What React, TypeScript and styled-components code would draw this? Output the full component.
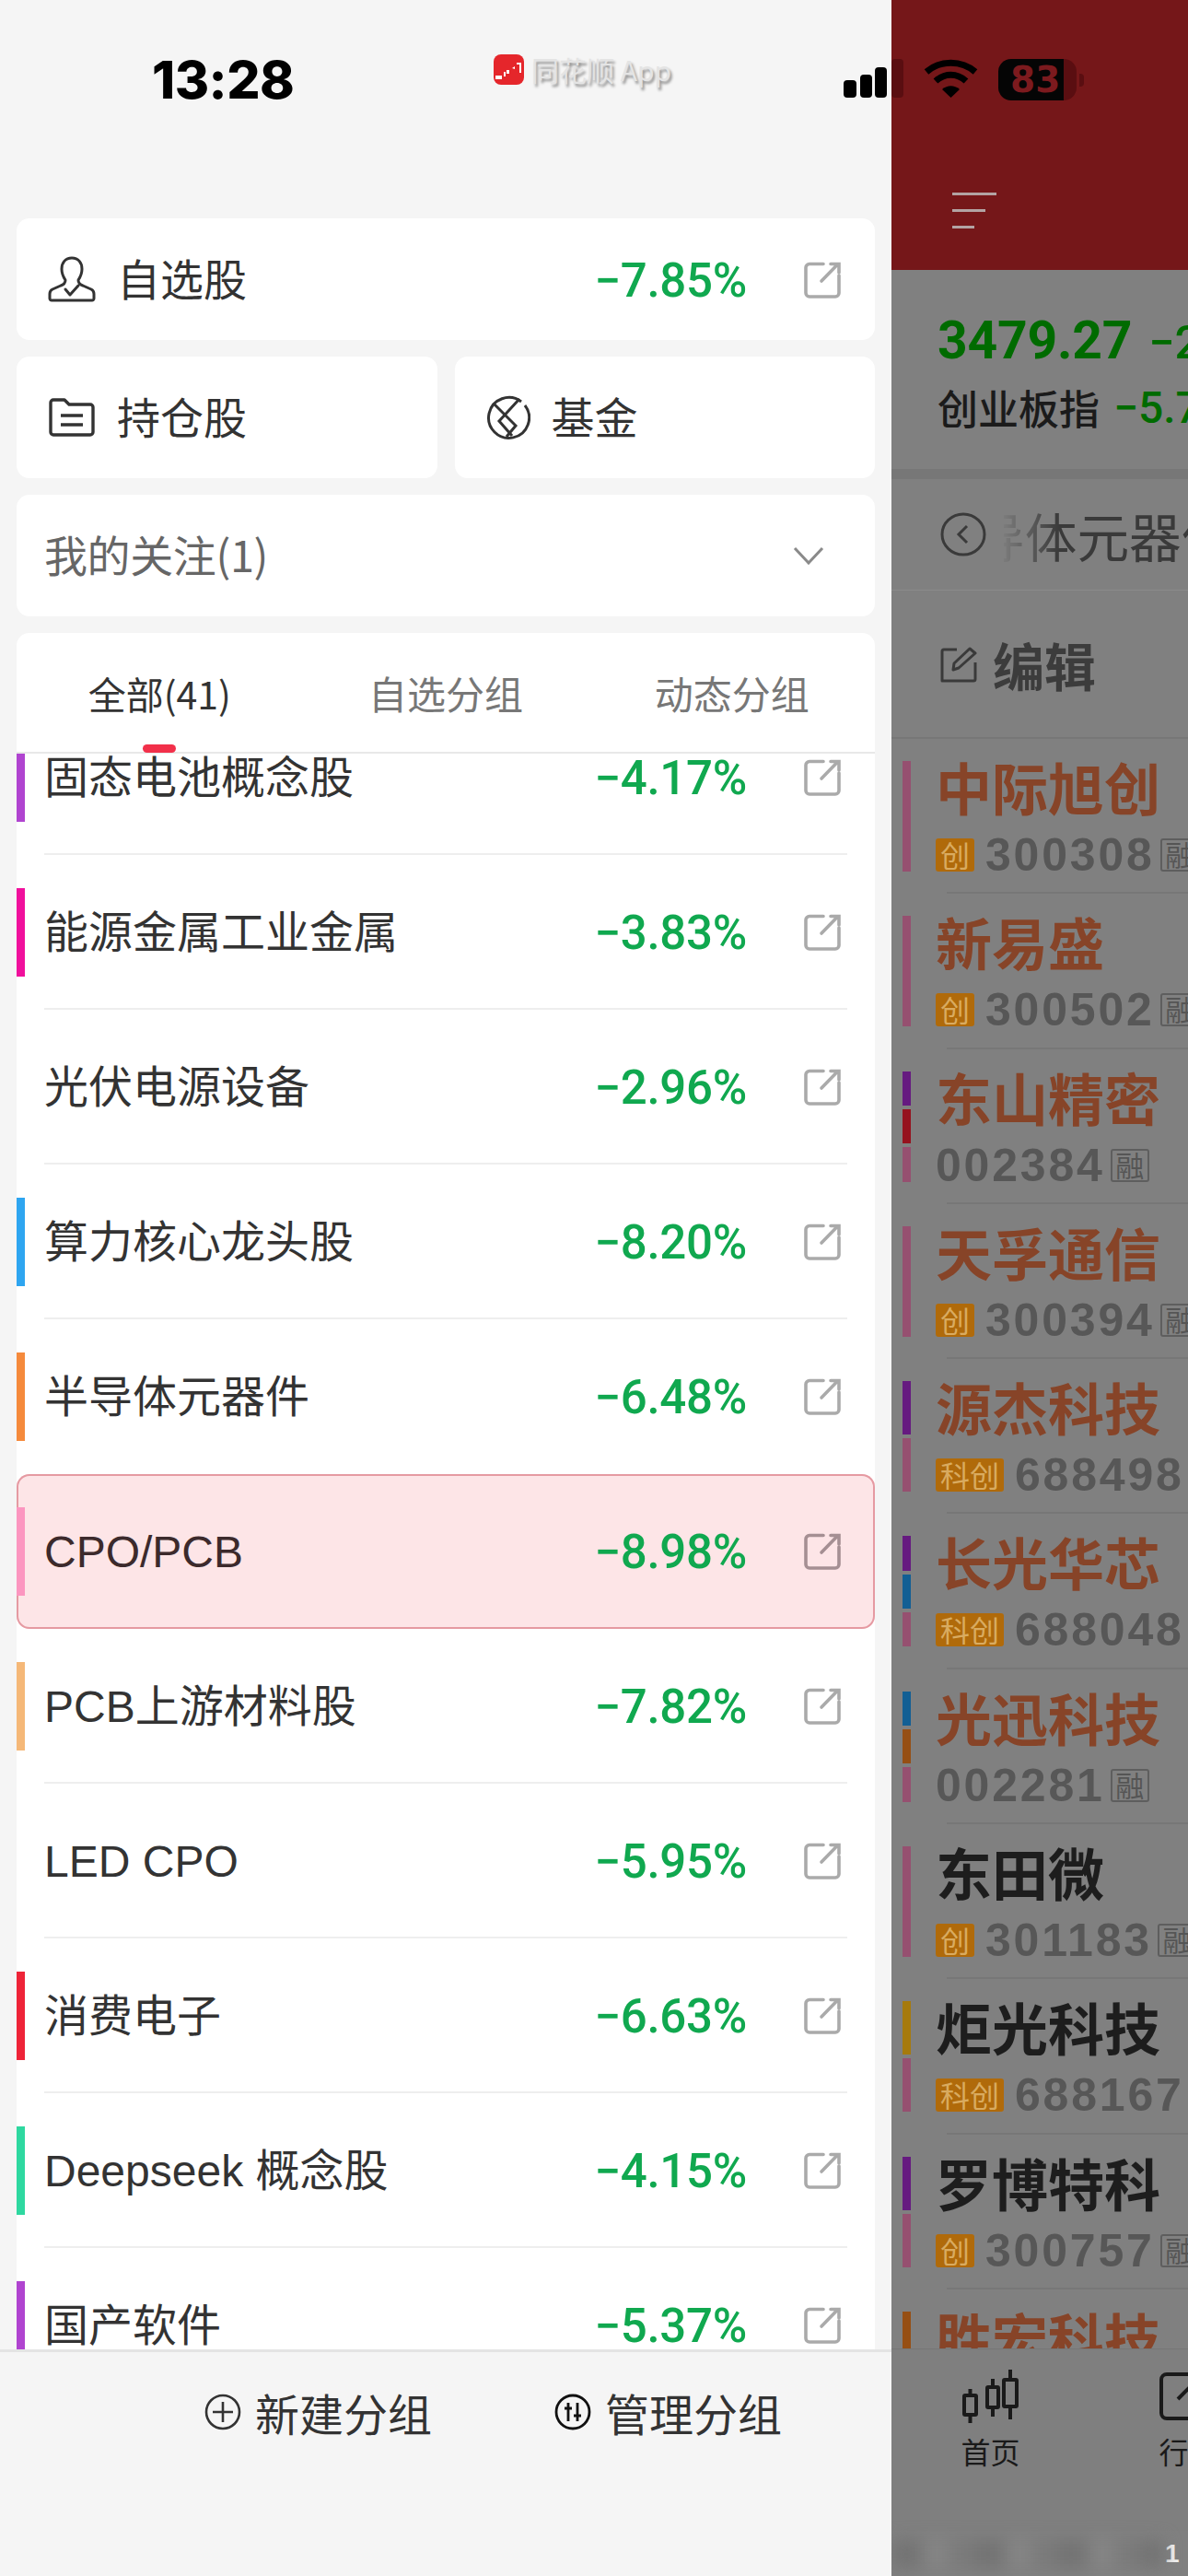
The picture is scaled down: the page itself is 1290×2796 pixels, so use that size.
import React from "react";
import styled, { createGlobalStyle } from "styled-components";

const CJK = `"Noto Sans CJK SC", "Noto Sans", sans-serif`;

const GlobalStyle = createGlobalStyle`
    html, body {
        margin: 0;
        padding: 0;
        background: #808080;
    }
    * {
        box-sizing: border-box;
    }
`;

const Page = styled.div`
    position: relative;
    width: 1290px;
    height: 2796px;
    display: flex;
    overflow: hidden;
    font-family: ${CJK};
`;

/* status bar sits on top of both panels */
const StatusBar = styled.div`
    position: absolute;
    top: 0;
    left: 0;
    width: 1290px;
    height: 130px;
    padding: 64px 113px 0 165px;
    display: flex;
    align-items: flex-start;
`;

const Time = styled.div`
    width: 371px;
    margin-top: -8px;
    font-family: Inter, "Liberation Sans", sans-serif;
    font-size: 57px;
    line-height: 62px;
    font-weight: 800;
    letter-spacing: -0.5px;
    color: #000;
`;

const AppTag = styled.div`
    display: flex;
    align-items: center;
    gap: 8px;
    margin-top: -7px;
`;

const AppName = styled.span`
    font-size: 30px;
    line-height: 36px;
    color: #e4e4e4;
    text-shadow: 2px 3px 3px #8c8c8c;
`;

const StatusIcons = styled.div`
    margin-left: auto;
    display: flex;
    align-items: flex-start;
`;

const Battery = styled.div`
    margin-left: 22px;
    display: flex;
    align-items: center;
`;

const BatteryFill = styled.div`
    width: 71px;
    height: 45px;
    padding-left: 13px;
    border-radius: 14px 0 0 14px;
    background: #050505;
    color: #7c1a1e;
    font-family: "DejaVu Sans", sans-serif;
    font-weight: 700;
    font-size: 39px;
    line-height: 45px;
`;

const BatteryRest = styled.div`
    width: 14px;
    height: 45px;
    border-radius: 0 14px 14px 0;
    background: #5a0e11;
`;

const BatteryTip = styled.div`
    width: 5px;
    height: 14px;
    margin-left: 3px;
    border-radius: 0 4px 4px 0;
    background: #5a0e11;
`;

/* left drawer */
const Drawer = styled.div`
    width: 968px;
    height: 2796px;
    flex: none;
    padding-top: 237px;
    display: flex;
    flex-direction: column;
    background: #f5f5f5;
`;

const Card = styled.div`
    height: 132px;
    flex: 1;
    padding: 0 34px 0 34px;
    display: flex;
    align-items: center;
    border-radius: 14px;
    background: #fff;
`;

const CardRow = styled.div`
    margin: 0 18px 18px;
    display: flex;
    gap: 19px;
`;

const CardLabel = styled.span<{ $muted?: boolean }>`
    margin-left: ${(p) => (p.$muted ? "-4px" : "23px")};
    padding-bottom: 5px;
    font-size: 47px;
    line-height: 60px;
    letter-spacing: ${(p) => (p.$muted ? "-0.4px" : "0")};
    color: ${(p) => (p.$muted ? "#666" : "#333")};
`;

const Percent = styled.span`
    margin-left: auto;
    margin-top: 3px;
    font-family: Roboto, sans-serif;
    font-weight: 500;
    font-size: 51px;
    line-height: 60px;
    letter-spacing: -0.3px;
    color: #10a84f;
`;

const LinkIcon = styled.svg`
    flex: none;
    width: 40px;
    height: 40px;
    margin-top: 2px;
    margin-left: 62px;
    margin-right: 3px;
    color: #aaa;
`;

const Tabs = styled.div`
    position: relative;
    height: 131px;
    margin: 0 18px;
    display: grid;
    grid-template-columns: repeat(3, 1fr);
    align-items: center;
    justify-items: center;
    border-radius: 14px 14px 0 0;
    border-bottom: 2px solid #e8e8e8;
    background: #fff;
`;

const Tab = styled.div<{ $active?: boolean }>`
    font-size: ${(p) => (p.$active ? "41px" : "42px")};
    line-height: 50px;
    color: ${(p) => (p.$active ? "#333" : "#777")};
`;

const TabMark = styled.div`
    position: absolute;
    left: 137px;
    bottom: -1px;
    width: 36px;
    height: 9px;
    border-radius: 5px;
    background: #f2304a;
`;

const ListClip = styled.div`
    height: 1732px;
    margin: 0 18px;
    flex: none;
    overflow: hidden;
    background: #fff;
`;

const List = styled.div`
    margin-top: -58px;
`;

const Row = styled.div<{ $active?: boolean }>`
    height: 168px;
    display: flex;
    align-items: center;
    border-radius: ${(p) => (p.$active ? "14px" : "0")};
    background: ${(p) => (p.$active ? "#fde5e7" : "transparent")};
    box-shadow: ${(p) => (p.$active ? "inset 0 0 0 2px #e59aa2" : "none")};
    ${LinkIcon} {
        color: ${(p) => (p.$active ? "#a58f93" : "#aaa")};
    }
`;

const RowStripe = styled.div<{ $color?: string }>`
    width: 9px;
    height: 96px;
    flex: none;
    background: ${(p) => p.$color || "transparent"};
`;

const RowBody = styled.div<{ $plain?: boolean }>`
    height: 100%;
    flex: 1;
    margin: 0 30px 0 21px;
    display: flex;
    align-items: center;
    border-bottom: 2px solid ${(p) => (p.$plain ? "transparent" : "#eeeeee")};
`;

const RowName = styled.span<{ $active?: boolean }>`
    padding-top: 4px;
    font-family: "Liberation Sans", ${CJK};
    font-size: 48px;
    line-height: 60px;
    color: ${(p) => (p.$active ? "#3c2a2c" : "#333")};
`;

const RowPercent = styled(Percent)``;

const RowLink = styled(LinkIcon)`
    margin-right: 7px;
`;

const Footer = styled.div`
    flex: 1;
    padding: 35px 0 0 222px;
    display: flex;
    gap: 133px;
    align-items: flex-start;
    border-top: 3px solid #e4e4e4;
    background: #f5f5f5;
`;

const FooterBtn = styled.div`
    display: flex;
    align-items: center;
    gap: 15px;
    font-size: 48px;
    line-height: 60px;
    color: #333;
`;

/* dimmed page behind the drawer */
const Behind = styled.div`
    width: 322px;
    flex: none;
    display: flex;
    flex-direction: column;
    overflow: hidden;
    background: #808080;
    white-space: nowrap;
`;

const RedHeader = styled.div`
    height: 293px;
    flex: none;
    padding: 209px 0 0 66px;
    display: flex;
    flex-direction: column;
    gap: 15px;
    background: #751719;
`;

const BurgerLine = styled.div<{ $w: number }>`
    width: ${(p) => p.$w}px;
    height: 3px;
    background: #b3a3a3;
`;

const IndexBlock = styled.div`
    height: 216px;
    flex: none;
    padding: 41px 0 0 50px;
`;

const IndexTop = styled.div`
    display: flex;
    align-items: baseline;
    gap: 18px;
    height: 72px;
    font-family: Roboto, sans-serif;
    color: #006b00;
`;

const IndexValue = styled.span`
    font-size: 57px;
    font-weight: 700;
    letter-spacing: -0.2px;
    line-height: 72px;
`;

const IndexDelta = styled.span`
    font-size: 50px;
    font-weight: 500;
`;

const IndexBottom = styled.div`
    margin-top: 6px;
    display: flex;
    align-items: center;
    gap: 15px;
    height: 60px;
`;

const IndexName = styled.span`
    font-size: 44px;
    font-weight: 500;
    color: #1b1b1b;
`;

const IndexPct = styled.span`
    font-family: Roboto, sans-serif;
    font-size: 48px;
    font-weight: 500;
    color: #006b00;
`;

const ThickLine = styled.div`
    height: 11px;
    flex: none;
    background: #777;
`;

const BackRow = styled.div`
    height: 121px;
    flex: none;
    padding-left: 53px;
    display: flex;
    align-items: center;
    border-bottom: 1px solid #8b8b8b;
`;

const TitleClip = styled.div`
    width: 220px;
    margin-left: 19px;
    overflow: hidden;
    flex: none;
    -webkit-mask-image: linear-gradient(to right, rgba(0, 0, 0, 0.08), #000 60px);
    mask-image: linear-gradient(to right, rgba(0, 0, 0, 0.08), #000 60px);
`;

const TitleText = styled.div`
    margin-left: -34px;
    font-size: 56.7px;
    line-height: 70px;
    color: #3a3a3a;
`;

const EditRow = styled.div`
    height: 161px;
    flex: none;
    padding-left: 53px;
    display: flex;
    align-items: center;
    gap: 17px;
    border-bottom: 2px solid #777;
`;

const EditText = styled.span`
    font-size: 56px;
    line-height: 70px;
    font-weight: 700;
    color: #3c3c3c;
`;

const Stocks = styled.div`
    height: 1747px;
    flex: none;
    overflow: hidden;
`;

const StockRow = styled.div`
    height: 166.3px;
    padding: 24px 0 0 12px;
    display: flex;
`;

const StripeCol = styled.div`
    width: 9px;
    height: 120px;
    flex: none;
    display: flex;
    flex-direction: column;
    gap: 4px;
`;

const StockStripe = styled.div<{ $color: string }>`
    flex: 1;
    background: ${(p) => p.$color};
`;

const StockInfo = styled.div`
    margin-left: 27px;
`;

const StockName = styled.div<{ $up?: boolean }>`
    height: 64px;
    font-size: 61px;
    line-height: 56px;
    font-weight: 700;
    color: ${(p) => (p.$up ? "#874428" : "#1d1d1d")};
`;

const CodeRow = styled.div`
    margin-top: 20px;
    height: 36px;
    display: flex;
    align-items: center;
`;

const BoardTag = styled.span`
    height: 36px;
    padding: 0 5px;
    margin-right: 12px;
    border-radius: 3px;
    background: #b06a0a;
    color: #d9ab60;
    font-size: 32px;
    line-height: 35px;
`;

const Code = styled.span`
    font-family: "Liberation Sans", sans-serif;
    font-size: 50px;
    line-height: 36px;
    font-weight: 700;
    letter-spacing: 2.8px;
    color: #575757;
`;

const MarginTag = styled.span`
    width: 42px;
    height: 36px;
    flex: none;
    margin-left: 6px;
    border: 2px solid #5e5e5e;
    border-radius: 3px;
    text-align: center;
    color: #555;
    font-size: 31px;
    line-height: 30px;
`;

const StockLine = styled.div`
    height: 2px;
    margin-left: 60px;
    background: #777;
`;

const BottomTabs = styled.div`
    height: 198px;
    flex: none;
    display: flex;
    align-items: flex-start;
    border-top: 1px solid #767676;
    background: #7f7f7f;
`;

const BottomTab = styled.div`
    width: 215px;
    padding-top: 22px;
    flex: none;
    display: flex;
    flex-direction: column;
    align-items: center;
    gap: 10px;
`;

const BottomTabIcon = styled.svg`
    height: 58px;
    width: 64px;
`;

const BottomTabLabel = styled.span`
    font-size: 32px;
    line-height: 40px;
    color: #1a1a1a;
`;

const HomeStrip = styled.div`
    display: flex;
    align-items: center;
    height: 50px;
`;

const BlurBar = styled.div`
    width: 295px;
    height: 30px;
    flex: none;
    filter: blur(9px);
    background: repeating-linear-gradient(90deg, #737373 0 34px, #858585 34px 62px, #7a7a7a 62px 90px);
`;

const PageNo = styled.span`
    margin-left: 2px;
    font-family: "Liberation Sans", sans-serif;
    font-size: 28px;
    font-weight: 700;
    color: #f2f2f2;
`;

const ExternalLink = ({ as: Comp = LinkIcon }: { as?: typeof LinkIcon }) => (
    <Comp viewBox="0 0 40 40" fill="none" stroke="currentColor" strokeWidth="3.6" strokeLinecap="round">
        <path d="M21 2.5H6a4 4 0 0 0-4 4V34a4 4 0 0 0 4 4h28a4 4 0 0 0 4-4V15" />
        <path d="M19 21L36.5 3M29 2.5h9V12" />
    </Comp>
);

const PersonIcon = () => (
    <svg width="52" height="50" viewBox="0 0 52 50" fill="none" stroke="#333" strokeWidth="3" strokeLinejoin="round" style={{ flex: "none" }}>
        <path d="M26 2c-7 0-11 5-11 12 0 6 2 9 4 12 0 3-2 5-5 6l-9 4c-2 1-3 3-3 5v5c0 1 1 2 2 2h44c1 0 2-1 2-2v-5c0-2-1-4-3-5l-9-4c-3-1-5-3-5-6 2-3 4-6 4-12 0-7-4-12-11-12z" />
        <path d="M19 36l5 6 9-10" strokeLinecap="round" />
    </svg>
);

const FolderIcon = () => (
    <svg width="52" height="42" viewBox="0 0 52 42" fill="none" stroke="#333" strokeWidth="3.4" strokeLinejoin="round" style={{ flex: "none" }}>
        <path d="M3 5a3 3 0 0 1 3-3h12l5 5h23a3 3 0 0 1 3 3v27a3 3 0 0 1-3 3H6a3 3 0 0 1-3-3z" />
        <path d="M14 19h24M14 29h24" />
    </svg>
);

const FundIcon = () => (
    <svg width="48" height="50" viewBox="0 0 48 50" fill="none" stroke="#333" strokeWidth="3" style={{ flex: "none" }}>
        <path d="M38 8a22 22 0 1 0 4 4" />
        <path d="M8 10l24 24-10 12M36 5L14 29l14 16" />
    </svg>
);

const Chevron = () => (
    <svg width="34" height="20" viewBox="0 0 34 20" fill="none" stroke="#8a8a8a" strokeWidth="3" style={{ marginLeft: "auto", marginRight: "21px" }}>
        <path d="M2 2l15 16L32 2" />
    </svg>
);

const PlusCircle = () => (
    <svg width="40" height="40" viewBox="0 0 40 40" fill="none" stroke="#333" strokeWidth="2.6">
        <circle cx="20" cy="20" r="18" />
        <path d="M20 9v22M9 20h22" />
    </svg>
);

const SlidersCircle = () => (
    <svg width="40" height="40" viewBox="0 0 40 40" fill="none" stroke="#111" strokeWidth="2.8">
        <circle cx="20" cy="20" r="18" />
        <path d="M15 10v20M25 10v20M11 16h8M21 24h8" />
    </svg>
);

const LogoIcon = () => (
    <svg width="33" height="33" viewBox="0 0 33 33">
        <rect width="33" height="33" rx="8" fill="#e5262b" />
        <path d="M2 23h7v4H2zM11 19h2v5h-2zM14 17h3v4h-3zM20 15l3-2v3zM25 9h5v11h-2v-9h-3z" fill="#fff" />
    </svg>
);

const SignalIcon = () => (
    <svg width="65" height="43" viewBox="0 0 65 43">
        <rect x="0" y="23" width="14" height="19" rx="4" fill="#000" />
        <rect x="18" y="17" width="13" height="25" rx="4" fill="#000" />
        <rect x="34" y="9" width="13" height="33" rx="4" fill="#000" />
        <rect x="52" y="0" width="13" height="42" rx="4" fill="#5a0e11" />
    </svg>
);

const WifiIcon = () => (
    <svg width="59" height="42" viewBox="0 0 59 42" fill="none" stroke="#000" strokeWidth="7" style={{ marginLeft: "22px" }}>
        <path d="M3 14C18 1 41 1 56 14" />
        <path d="M13 24C23 15 36 15 46 24" />
        <path d="M29.5 42L20 33c6-5 13-5 19 0z" fill="#000" stroke="none" />
    </svg>
);

const BackIcon = () => (
    <svg width="50" height="48" viewBox="0 0 50 48" fill="none" stroke="#3a3a3a" strokeWidth="3" style={{ flex: "none" }}>
        <ellipse cx="25" cy="24" rx="23" ry="22" />
        <path d="M29 15l-9 9 9 9" />
    </svg>
);

const EditIcon = () => (
    <svg width="40" height="40" viewBox="0 0 40 40" fill="none" stroke="#3a3a3a" strokeWidth="3" strokeLinejoin="round" style={{ flex: "none" }}>
        <path d="M18 4H4a2 2 0 0 0-2 2v32h34a2 2 0 0 0 2-2V18" />
        <path d="M14 26l1-7L32 3l6 5-18 16z" />
    </svg>
);

const Candles = () => (
    <BottomTabIcon viewBox="0 0 64 58" fill="none" stroke="#1a1a1a" strokeWidth="4">
        <rect x="3" y="28" width="13" height="21" rx="1" />
        <path d="M9.500 21v7M9.500 49v9" />
        <rect x="28" y="19" width="12" height="22" rx="1" />
        <path d="M34 10v9M34 41v10" />
        <rect x="46" y="11" width="14" height="29" rx="1" />
        <path d="M53 0v11M53 40v14" />
    </BottomTabIcon>
);

const MarketIcon = () => (
    <BottomTabIcon viewBox="0 0 64 58" fill="none" stroke="#1a1a1a" strokeWidth="4" strokeLinejoin="round">
        <rect x="2" y="5" width="60" height="48" rx="6" />
        <path d="M20 32l12-12 12 12" />
    </BottomTabIcon>
);

const groups = [
    { name: "固态电池概念股", pct: "−4.17%", color: "#b044d0" },
    { name: "能源金属工业金属", pct: "−3.83%", color: "#f0109c" },
    { name: "光伏电源设备", pct: "−2.96%" },
    { name: "算力核心龙头股", pct: "−8.20%", color: "#2ea5f0" },
    { name: "半导体元器件", pct: "−6.48%", color: "#f58a3c" },
    { name: "CPO/PCB", pct: "−8.98%", color: "#fc96c0", active: true },
    { name: "PCB上游材料股", pct: "−7.82%", color: "#f5b878" },
    { name: "LED CPO", pct: "−5.95%" },
    { name: "消费电子", pct: "−6.63%", color: "#ee2438" },
    { name: "Deepseek 概念股", pct: "−4.15%", color: "#2ed8a0" },
    { name: "国产软件", pct: "−5.37%", color: "#b044d0" },
];

const PINK = "#965070";
const PURPLE = "#661a80";
const RED = "#96121e";
const BLUE = "#125f94";
const BROWN = "#964f14";
const GOLD = "#a67a0d";

const stocks = [
    { name: "中际旭创", board: "创", code: "300308", rong: true, up: true, stripes: [PINK] },
    { name: "新易盛", board: "创", code: "300502", rong: true, up: true, stripes: [PINK] },
    { name: "东山精密", code: "002384", rong: true, up: true, stripes: [PURPLE, RED, PINK] },
    { name: "天孚通信", board: "创", code: "300394", rong: true, up: true, stripes: [PINK] },
    { name: "源杰科技", board: "科创", code: "688498", up: true, stripes: [PURPLE, PINK] },
    { name: "长光华芯", board: "科创", code: "688048", up: true, stripes: [PURPLE, BLUE, PINK] },
    { name: "光迅科技", code: "002281", rong: true, up: true, stripes: [BLUE, BROWN, PINK] },
    { name: "东田微", board: "创", code: "301183", rong: true, stripes: [PINK] },
    { name: "炬光科技", board: "科创", code: "688167", rong: true, stripes: [GOLD, PINK] },
    { name: "罗博特科", board: "创", code: "300757", rong: true, stripes: [PURPLE, PINK] },
    { name: "胜宏科技", board: "创", code: "300476", rong: true, up: true, stripes: [BROWN, PINK] },
];

const App = () => {
    return (
        <Page>
            <GlobalStyle />
            <Drawer>
                <CardRow>
                    <Card>
                        <PersonIcon />
                        <CardLabel>自选股</CardLabel>
                        <Percent>−7.85%</Percent>
                        <ExternalLink />
                    </Card>
                </CardRow>
                <CardRow>
                    <Card>
                        <FolderIcon />
                        <CardLabel>持仓股</CardLabel>
                    </Card>
                    <Card>
                        <FundIcon />
                        <CardLabel>基金</CardLabel>
                    </Card>
                </CardRow>
                <CardRow>
                    <Card>
                        <CardLabel $muted>我的关注(1)</CardLabel>
                        <Chevron />
                    </Card>
                </CardRow>
                <Tabs>
                    <Tab $active>全部(41)</Tab>
                    <Tab>自选分组</Tab>
                    <Tab>动态分组</Tab>
                    <TabMark />
                </Tabs>
                <ListClip>
                    <List>
                        {groups.map((item, idx) => (
                            <Row key={item.name} $active={item.active}>
                                <RowStripe $color={item.color} />
                                <RowBody $plain={item.active || groups[idx + 1]?.active}>
                                    <RowName $active={item.active}>{item.name}</RowName>
                                    <RowPercent>{item.pct}</RowPercent>
                                    <ExternalLink as={RowLink} />
                                </RowBody>
                            </Row>
                        ))}
                    </List>
                </ListClip>
                <Footer>
                    <FooterBtn>
                        <PlusCircle />
                        新建分组
                    </FooterBtn>
                    <FooterBtn>
                        <SlidersCircle />
                        管理分组
                    </FooterBtn>
                </Footer>
            </Drawer>

            <Behind>
                <RedHeader>
                    <BurgerLine $w={48} />
                    <BurgerLine $w={36} />
                    <BurgerLine $w={24} />
                </RedHeader>
                <IndexBlock>
                    <IndexTop>
                        <IndexValue>3479.27</IndexValue>
                        <IndexDelta>−2</IndexDelta>
                    </IndexTop>
                    <IndexBottom>
                        <IndexName>创业板指</IndexName>
                        <IndexPct>−5.7</IndexPct>
                    </IndexBottom>
                </IndexBlock>
                <ThickLine />
                <BackRow>
                    <BackIcon />
                    <TitleClip>
                        <TitleText>导体元器件</TitleText>
                    </TitleClip>
                </BackRow>
                <EditRow>
                    <EditIcon />
                    <EditText>编辑</EditText>
                </EditRow>
                <Stocks>
                    {stocks.map((s) => (
                        <React.Fragment key={s.code}>
                            <StockRow>
                                <StripeCol>
                                    {s.stripes.map((c, i) => (
                                        <StockStripe key={i} $color={c} />
                                    ))}
                                </StripeCol>
                                <StockInfo>
                                    <StockName $up={s.up}>{s.name}</StockName>
                                    <CodeRow>
                                        {s.board && <BoardTag>{s.board}</BoardTag>}
                                        <Code>{s.code}</Code>
                                        {s.rong && <MarginTag>融</MarginTag>}
                                    </CodeRow>
                                </StockInfo>
                            </StockRow>
                            <StockLine />
                        </React.Fragment>
                    ))}
                </Stocks>
                <BottomTabs>
                    <BottomTab>
                        <Candles />
                        <BottomTabLabel>首页</BottomTabLabel>
                    </BottomTab>
                    <BottomTab>
                        <MarketIcon />
                        <BottomTabLabel>行情</BottomTabLabel>
                    </BottomTab>
                </BottomTabs>
                <HomeStrip>
                    <BlurBar />
                    <PageNo>1</PageNo>
                </HomeStrip>
            </Behind>

            <StatusBar>
                <Time>13:28</Time>
                <AppTag>
                    <LogoIcon />
                    <AppName>同花顺 App</AppName>
                </AppTag>
                <StatusIcons>
                    <SignalIcon />
                    <WifiIcon />
                    <Battery>
                        <BatteryFill>83</BatteryFill>
                        <BatteryRest />
                        <BatteryTip />
                    </Battery>
                </StatusIcons>
            </StatusBar>
        </Page>
    );
};

export default App;
